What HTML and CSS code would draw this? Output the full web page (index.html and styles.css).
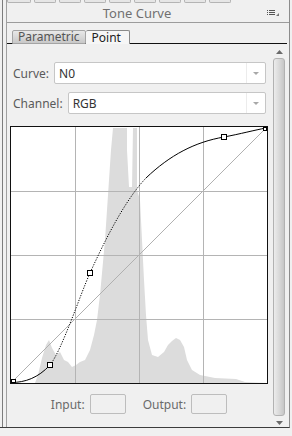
FILE: index.html
```html
<!DOCTYPE html>
<html>
<head>
	<meta name="viewport" content="width=device-width, initial-scale=1">
	<link rel="stylesheet" href="styles.css">
</head>
<body>
	<div class="frame">
		<div class="frame-inner">
			<div class="panel">
				<div class="doctabs">
					<span></span><span></span><span></span><span></span><span></span>
					<span></span><span></span><span></span><span></span>
				</div>
				<div class="titlebar">
					<div class="title">Tone Curve</div>
					<div class="menu">
						<svg width="13" height="7" viewBox="0 0 13 7">
							<rect x="0" y="0" width="1" height="1" fill="#555"/>
							<rect x="2" y="0" width="6" height="1" fill="#555"/>
							<rect x="0" y="2" width="1" height="1" fill="#555"/>
							<rect x="2" y="2" width="6" height="1" fill="#555"/>
							<rect x="0" y="4" width="1" height="1" fill="#555"/>
							<rect x="2" y="4" width="6" height="1" fill="#555"/>
							<polygon points="12,3 12,6 9,6" fill="#777"/>
						</svg>
					</div>
				</div>
				<div class="tabs">
					<div class="tab">Parametric</div>
					<div class="tab active">Point</div>
				</div>
				<div class="content">
					<div class="main">
						<div class="field">
							<label>Curve:</label>
							<div class="select"><span>N0</span><i></i></div>
						</div>
						<div class="field">
							<label>Channel:</label>
							<div class="select"><span>RGB</span><i></i></div>
						</div>
						<div class="graph">
							<svg width="256" height="256" viewBox="11 127 256 256">
								<polygon fill="#dcdcdc" points="11,383 35,383 38,375 42,358 46,345 49,340 52,348 56,355 60,352 64,360 68,362 72,367 76,365 80,362 85,360 90,350 94,335 97,320 100,295 103,262 105,240 107,210 109,180 111,150 113,128 127,128 127,150 129,187 132,187 133,128 137,128 137,190 140,200 142,240 144,280 146,315 148,340 152,355 158,357 164,352 168,345 172,341 176,338 180,340 184,347 187,360 192,370 200,375 215,378 236,379 245,382 267,383"/>
								<g stroke="#b4b4b4" stroke-width="1">
									<line x1="75.5" y1="127" x2="75.5" y2="383"/>
									<line x1="139.5" y1="127" x2="139.5" y2="383"/>
									<line x1="203.5" y1="127" x2="203.5" y2="383"/>
									<line x1="11" y1="191.5" x2="267" y2="191.5"/>
									<line x1="11" y1="255.5" x2="267" y2="255.5"/>
									<line x1="11" y1="319.5" x2="267" y2="319.5"/>
								</g>
								<line x1="11" y1="383" x2="267" y2="127" stroke="#b0b0b0" stroke-width="1"/>
								<g fill="none" stroke="#000" stroke-width="1">
									<path d="M11,382.5 C25,382.5 38,378 50,365"/>
									<path d="M50,365 C62,350 80,295 90,273 C105,240 125,200 146,178" stroke-dasharray="1.2 1.4"/>
									<path d="M146,178 C170,155 195,142 224,137 C240,134 255,130 266,128"/>
								</g>
								<g fill="#fff" stroke="#000" stroke-width="1">
									<rect x="47.5" y="362.5" width="5" height="5"/>
									<rect x="87.5" y="270.5" width="5" height="5"/>
									<rect x="221.5" y="134.5" width="5" height="5"/>
									<rect x="263.5" y="127.5" width="3" height="3"/>
									<rect x="11.5" y="379.5" width="4" height="3"/>
								</g>
							</svg>
						</div>
						<div class="io">
							<label>Input:</label>
							<div class="box"></div>
							<label class="out">Output:</label>
							<div class="box"></div>
						</div>
					</div>
					<div class="scroll">
						<svg width="7" height="4" viewBox="0 0 7 4"><polygon points="3.5,0 7,4 0,4" fill="#6a6a6a"/></svg>
						<div class="thumb"></div>
						<svg width="7" height="4" viewBox="0 0 7 4"><polygon points="0,0 7,0 3.5,4" fill="#6a6a6a"/></svg>
					</div>
				</div>
			</div>
		</div>
	</div>
</body>
</html>
```

FILE: styles.css
```css
body {
	margin: 0;
	background: #f0f0f0;
	font-family: "Noto Sans", "Open Sans", sans-serif;
	font-size: 12px;
	color: #555;
}

.frame {
	width: 287px;
	height: 427px;
	padding-left: 2px;
	border-right: 1px solid #8c8c8c;
	border-bottom: 1px solid #3c3c3c;
}

.frame-inner {
	height: 100%;
	padding-left: 3px;
	border-left: 1px solid #7c7c7c;
}

.panel {
	height: 100%;
	border-left: 1px solid #a0a0a0;
	display: flex;
	flex-direction: column;
}

.doctabs {
	height: 3px;
	display: flex;
	gap: 3px;
	overflow: hidden;
}

.doctabs span {
	width: 20px;
	height: 2px;
	border: 1px solid #b4b4b4;
	border-top: none;
	border-radius: 0 0 2px 2px;
	background: #e6e6e6;
}

.doctabs span:first-child {
	width: 22px;
}

.titlebar {
	height: 19px;
	border-bottom: 1px solid #9c9c9c;
	display: flex;
	align-items: center;
}

.title {
	flex: 1;
	text-align: center;
	font-size: 13px;
	color: #707070;
}

.menu {
	width: 22px;
	display: flex;
	padding-top: 1px;
}

.menu svg {
	display: block;
}

.tabs {
	height: 20px;
	margin-right: 2px;
	padding-left: 5px;
	border-bottom: 1px solid #111;
	display: flex;
	align-items: flex-end;
}

.tab {
	height: 12px;
	line-height: 12px;
	margin-bottom: -1px;
	padding: 0 5px;
	border: 1px solid #a4a4a4;
	border-radius: 2px 2px 0 0;
	background: linear-gradient(#e8e8e8, #c8c8c8);
	color: #555;
	font-size: 12px;
}

.tab.active {
	height: 13px;
	line-height: 13px;
	padding: 0 8px 0 6px;
	border-color: #8a8a8a;
	border-left: none;
	border-bottom: none;
	background: #f6f6f6;
	color: #222;
}

.content {
	flex: 1;
	display: flex;
}

.main {
	flex: 1;
	padding-top: 18px;
	display: flex;
	flex-direction: column;
}

.field {
	display: flex;
	align-items: center;
	gap: 5px;
	margin: 0 7px 8px 6px;
}

.field label {
	color: #5a5a5a;
}

.select {
	flex: 1;
	height: 20px;
	border: 1px solid #c6c6c6;
	border-radius: 2px;
	background: #fff;
	display: flex;
	align-items: center;
	color: #333;
}

.select span {
	flex: 1;
	padding-left: 4px;
}

.select i {
	width: 18px;
	height: 20px;
	border-left: 1px solid #ececec;
	position: relative;
}

.select i::after {
	content: "";
	position: absolute;
	left: 6px;
	top: 9px;
	border-left: 3px solid transparent;
	border-right: 3px solid transparent;
	border-top: 3px solid #a8a8a8;
}

.graph {
	width: 256px;
	height: 256px;
	margin: 4px 0 0 3px;
	border: 1px solid #111;
	background: #fff;
}

.graph svg {
	display: block;
}

.io {
	margin-top: 10px;
	display: flex;
	align-items: center;
	justify-content: center;
	padding-right: 2px;
}

.io label {
	color: #6a6a6a;
	margin-right: 5px;
}

.io .out {
	margin-left: 17px;
}

.box {
	width: 34px;
	height: 18px;
	border: 1px solid #bdbdbd;
	border-radius: 2px;
}

.scroll {
	width: 12px;
	margin-right: 4px;
	padding: 6px 0 2px;
	display: flex;
	flex-direction: column;
	align-items: center;
}

.scroll svg {
	display: block;
}

.thumb {
	flex: 1;
	width: 10px;
	margin: 4px 0 5px;
	border: 1px solid #b2b2b2;
	border-radius: 3px;
	background: linear-gradient(90deg, #ececec, #d6d6d6 60%, #c6c6c6);
}
```
